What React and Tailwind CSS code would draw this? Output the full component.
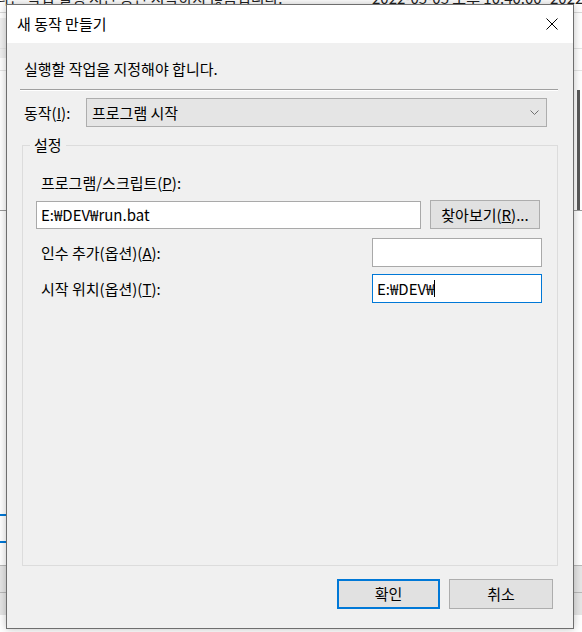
export default function App() {
    const font = { fontFamily: '"Noto Sans CJK KR", "Noto Sans", sans-serif' }

    return (
        <div
            className="relative w-[582px] h-[632px] overflow-hidden bg-[#f0f0f0] text-black"
            style={font}
        >
            {/* window behind the dialog */}
            <div className="absolute left-0 top-0 w-full h-full bg-white">
                <div className="absolute left-[-4px] top-[-12px] text-[15px] leading-[20px] whitespace-nowrap text-[#222]">
                    다른 작업 실행 시간 동안 시작하지 않음입니다.
                    <span className="absolute left-[376px] top-0">2022-05-05 오후 10:40:00</span>
                    <span className="absolute left-[554px] top-0">2022</span>
                </div>
                <div className="absolute left-0 top-[12px] w-full h-px bg-[#d9d9d9]" />
                <div className="absolute left-0 top-[18px] w-[6px] h-[40px] bg-[#f0f0f0]" />
                <div className="absolute left-0 top-[48px] w-full h-px bg-[#e5e5e5]" />
                <div className="absolute left-0 top-[70px] w-full h-px bg-[#e5e5e5]" />
                <div className="absolute left-0 top-[210px] w-full h-px bg-[#9a9a9a]" />
                <div className="absolute left-0 top-[514px] w-[6px] h-[2px] bg-[#0078d7]" />
                <div className="absolute left-0 top-[541px] w-[6px] h-[2px] bg-[#0078d7]" />
                <div className="absolute left-0 top-[565px] w-full h-[50px] bg-[#e6e6e6]" />
                <div className="absolute left-0 top-[565px] w-full h-px bg-[#b9b9b9]" />
                <div className="absolute right-[2px] top-[90px] w-[3px] h-[120px] bg-[#5a5a5a]" />
                <div className="absolute left-0 top-[592px] w-full h-px bg-[#b9b9b9]" />
            </div>

            {/* dialog */}
            <div className="absolute left-[6px] top-[4px] w-[568px] h-[625px] border border-[#6e6e6e] bg-[#f0f0f0] flex flex-col shadow-[0_0_8px_rgba(0,0,0,0.25)]">
                {/* title bar */}
                <div className="h-[38px] bg-white flex items-center shrink-0">
                    <span className="pl-[10px] text-[15px] leading-[20px]">새 동작 만들기</span>
                    <div className="ml-auto mr-[15px] w-[12px] h-[12px] relative">
                        <svg width="12" height="12" viewBox="0 0 12 12" className="absolute left-0 top-0">
                            <path d="M0.5 0.5 L11.5 11.5 M11.5 0.5 L0.5 11.5" stroke="#000" strokeWidth="1" fill="none" />
                        </svg>
                    </div>
                </div>

                {/* body */}
                <div className="flex flex-col text-[15px] leading-[20px]">
                    <div className="pl-[17px] mt-[16px]">실행할 작업을 지정해야 합니다.</div>

                    <div className="ml-[13px] mr-[15px] mt-[10px] h-[2px] border-t border-t-[#a0a0a0] border-b border-b-white" />

                    <div className="flex items-center mt-[7px] pl-[17px]">
                        <span className="w-[62px]">
                            동작(<span className="underline">I</span>):
                        </span>
                        <div className="w-[461px] h-[29px] bg-[#e5e5e5] border border-[#adadad] flex items-center pl-[5px] pr-[7px]">
                            <span>프로그램 시작</span>
                            <svg width="9" height="5" viewBox="0 0 9 5" className="ml-auto">
                                <path d="M0.5 0.5 L4.5 4.5 L8.5 0.5" stroke="#707070" strokeWidth="1" fill="none" />
                            </svg>
                        </div>
                    </div>

                    {/* group box */}
                    <div className="relative ml-[15px] mt-[18px] w-[536px] h-[421px] border border-[#dcdcdc] flex flex-col">
                        <span className="absolute left-[7px] top-[-11px] px-[4px] bg-[#f0f0f0]">설정</span>

                        <div className="mt-[27px] pl-[18px]">
                            프로그램/스크립트(<span className="underline">P</span>):
                        </div>

                        <div className="flex items-center mt-[7px] pl-[13px]">
                            <div className="w-[385px] h-[28px] bg-white border border-[#a9a9a9] flex items-center pl-[4px]">
                                E:₩DEV₩run.bat
                            </div>
                            <div className="ml-[9px] w-[110px] h-[29px] bg-[#e1e1e1] border border-[#adadad] flex items-center justify-center">
                                찾아보기(<span className="underline">R</span>)...
                            </div>
                        </div>

                        <div className="flex items-center mt-[9px] pl-[18px]">
                            <span className="w-[331px]">
                                인수 추가(옵션)(<span className="underline">A</span>):
                            </span>
                            <div className="w-[170px] h-[29px] bg-white border border-[#a9a9a9]" />
                        </div>

                        <div className="flex items-center mt-[7px] pl-[18px]">
                            <span className="w-[331px]">
                                시작 위치(옵션)(<span className="underline">T</span>):
                            </span>
                            <div className="w-[170px] h-[29px] bg-white border border-[#0078d7] flex items-center pl-[4px]">
                                <span>E:₩DEV₩</span>
                                <span className="w-px h-[17px] bg-black" />
                            </div>
                        </div>
                    </div>

                    {/* buttons */}
                    <div className="flex justify-end gap-[9px] mt-[13px] pr-[20px]">
                        <div className="w-[103px] h-[30px] bg-[#e1e1e1] border-2 border-[#0078d7] flex items-center justify-center">
                            확인
                        </div>
                        <div className="w-[104px] h-[30px] bg-[#e1e1e1] border border-[#adadad] flex items-center justify-center">
                            취소
                        </div>
                    </div>
                </div>
            </div>
        </div>
    )
}
